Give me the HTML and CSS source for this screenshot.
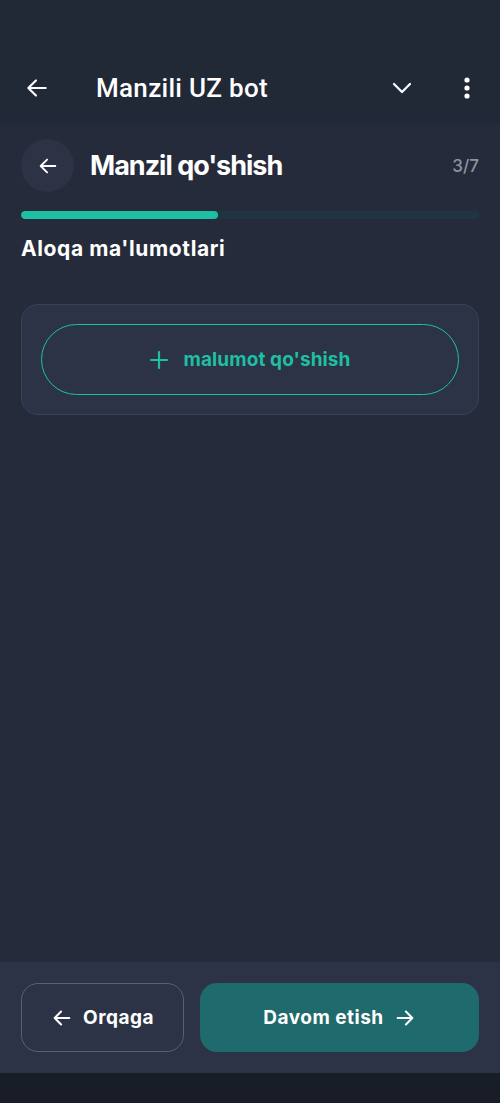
FILE: index.html
```html
<!DOCTYPE html>
<html>
<head>
<meta charset="utf-8">
<link rel="stylesheet" href="styles.css">
</head>
<body>
<div class="app">
  <header class="topbar">
    <div class="status"></div>
    <div class="bar">
      <svg class="tb-back" width="26" height="26" viewBox="0 0 24 24"><path d="M20 12H4M11 5l-7 7 7 7" fill="none" stroke="#fff" stroke-width="2" stroke-linecap="round" stroke-linejoin="round"/></svg>
      <div class="tb-title">Manzili UZ bot</div>
      <svg class="tb-chev" width="24" height="24" viewBox="0 0 24 24"><path d="M4 8l8 8 8-8" fill="none" stroke="#fff" stroke-width="2.2" stroke-linecap="round" stroke-linejoin="round"/></svg>
      <svg class="tb-dots" width="8" height="24" viewBox="0 0 8 24"><circle cx="4" cy="4" r="2.6" fill="#fff"/><circle cx="4" cy="12" r="2.6" fill="#fff"/><circle cx="4" cy="20" r="2.6" fill="#fff"/></svg>
    </div>
  </header>
  <main class="content">
    <div class="head">
      <div class="circle-btn">
        <svg width="22" height="22" viewBox="0 0 24 24"><path d="M20 12H4M11 5l-7 7 7 7" fill="none" stroke="#fff" stroke-width="2" stroke-linecap="round" stroke-linejoin="round"/></svg>
      </div>
      <h1 class="title">Manzil qo'shish</h1>
      <span class="step">3/7</span>
    </div>
    <div class="progress"><div class="fill" style="width:43%"></div></div>
    <h2 class="section">Aloqa ma'lumotlari</h2>
    <div class="card">
      <button class="add-btn">
        <svg width="20" height="20" viewBox="0 0 20 20"><path d="M10 2v16M2 10h16" stroke="#1fbfa3" stroke-width="2.2" stroke-linecap="round"/></svg>
        <span>malumot qo'shish</span>
      </button>
    </div>
  </main>
  <footer class="footer">
    <button class="btn-back">
      <svg width="22" height="22" viewBox="0 0 24 24"><path d="M20 12H4M11 5l-7 7 7 7" fill="none" stroke="#fff" stroke-width="2.2" stroke-linecap="round" stroke-linejoin="round"/></svg>
      <span>Orqaga</span>
    </button>
    <button class="btn-next">
      <span>Davom etish</span>
      <svg width="22" height="22" viewBox="0 0 24 24"><path d="M4 12h16M13 5l7 7-7 7" fill="none" stroke="#fff" stroke-width="2.2" stroke-linecap="round" stroke-linejoin="round"/></svg>
    </button>
  </footer>
  <div class="navbar"></div>
</div>
</body>
</html>
```
FILE: styles.css
```css
* { box-sizing: border-box; margin: 0; padding: 0; }
html, body { width: 500px; height: 1103px; }
body { background: #262b3b; font-family: "Inter", "Lato", sans-serif; color: #fff; overflow: hidden; }
.app { display: flex; flex-direction: column; height: 1103px; }
.topbar { background: #212836; height: 125px; flex-shrink: 0; }
.status { height: 50px; }
.bar { height: 75px; display: flex; align-items: center; padding: 0 0 0 24px; }
.tb-back { flex-shrink: 0; }
.tb-title { font-family: "Roboto", sans-serif; font-weight: 500; font-size: 26px; margin-left: 46px; flex: 1; letter-spacing: 0.3px; }
.tb-chev { margin-right: 49px; }
.tb-dots { margin-right: 29px; }
.content { flex: 1; padding: 14px 21px 0 21px; }
.head { display: flex; align-items: center; height: 53px; }
.circle-btn { width: 53px; height: 53px; border-radius: 50%; background: #2d3345; display: flex; align-items: center; justify-content: center; flex-shrink: 0; }
.title { font-size: 27px; font-weight: 700; margin-left: 16px; flex: 1; letter-spacing: -1px; line-height: 30px; padding-top: 1px; }
.step { font-size: 17px; font-weight: 500; color: #8d93a3; margin-right: 0; }
.progress { margin-top: 19px; height: 8px; border-radius: 4px; background: #1f3542; overflow: hidden; }
.progress .fill { height: 100%; background: #1fbfa3; border-radius: 4px; }
.section { font-size: 21px; font-weight: 700; margin-top: 17px; line-height: 26px; letter-spacing: 0.6px; }
.card { margin-top: 42px; background: #2c3346; border: 1px solid #344454; border-radius: 17px; padding: 19px 19px; }
.add-btn { width: 100%; height: 71px; border-radius: 36px; border: 1.5px solid #1fbfa3; background: transparent; display: flex; align-items: center; justify-content: center; gap: 14px; font-family: "Inter", sans-serif; font-size: 19px; font-weight: 700; color: #1fbfa3; letter-spacing: 0.1px; }
.footer { height: 111px; background: #2d3346; display: flex; align-items: center; gap: 16px; padding: 0 21px; flex-shrink: 0; }
.footer button { height: 69px; border-radius: 17px; display: flex; align-items: center; justify-content: center; gap: 10px; font-family: "Inter", sans-serif; font-size: 19px; font-weight: 700; color: #fff; letter-spacing: 0.5px; }
.btn-back { width: 163px; background: transparent; border: 1px solid #5a6072; }
.btn-next { flex: 1; background: #1f6a6c; border: none; gap: 13px; }
.navbar { height: 30px; background: #181d27; flex-shrink: 0; }
```
